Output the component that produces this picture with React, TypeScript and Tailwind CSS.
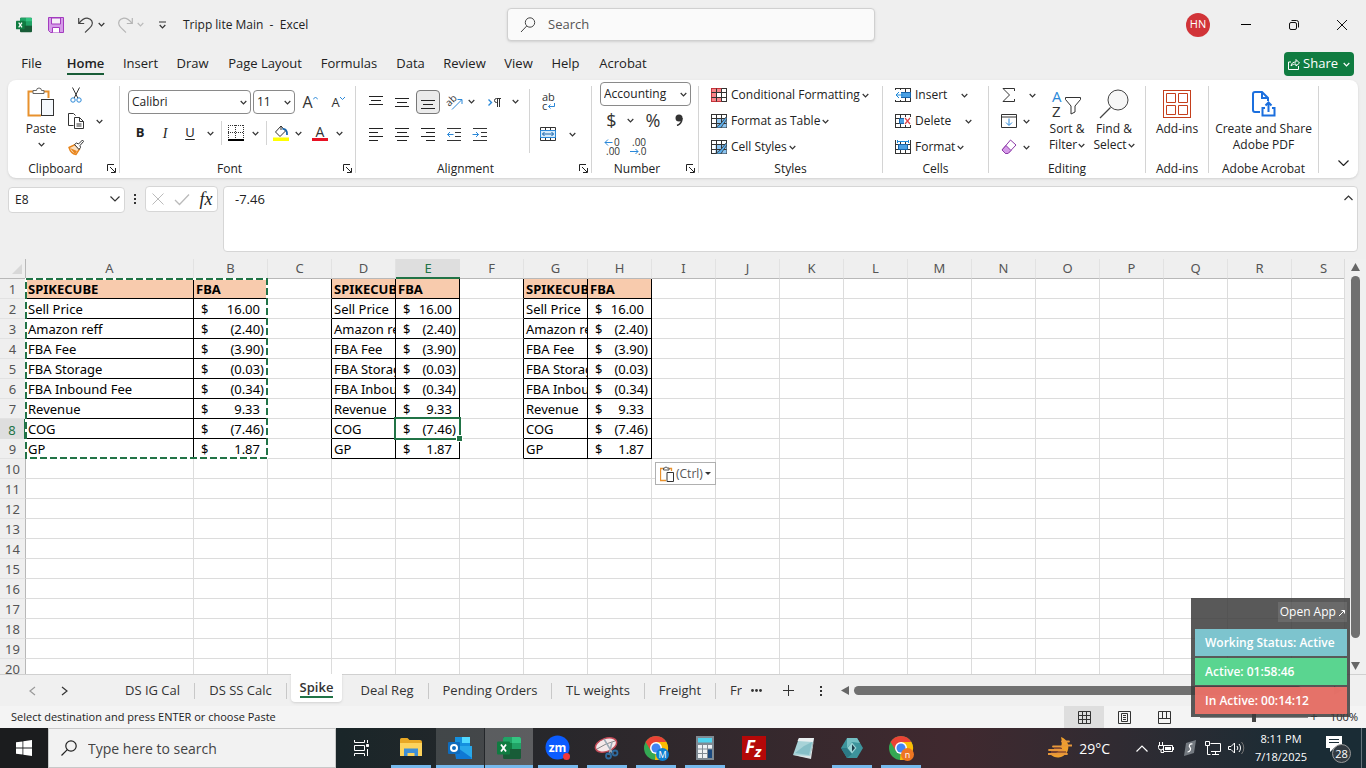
import { useState } from "react";
import type { ReactNode } from "react";

const ribbonTabs = ["File", "Home", "Insert", "Draw", "Page Layout", "Formulas", "Data", "Review", "View", "Help", "Acrobat"];
const tabWidths = ["w-[47px]", "w-[61px]", "w-[49px]", "w-[55px]", "w-[90px]", "w-[78px]", "w-[45px]", "w-[63px]", "w-[45px]", "w-[49px]", "w-[66px]"];

const columns = "ABCDEFGHIJKLMNOPQRS".split("");
const rows = Array.from({ length: 20 }, (_, i) => i + 1);

const items = [
  ["SPIKECUBE", "FBA"],
  ["Sell Price", "16.00"],
  ["Amazon reff", "(2.40)"],
  ["FBA Fee", "(3.90)"],
  ["FBA Storage", "(0.03)"],
  ["FBA Inbound Fee", "(0.34)"],
  ["Revenue", "9.33"],
  ["COG", "(7.46)"],
  ["GP", "1.87"],
];

function Chevron({ className = "text-[#333]" }: { className?: string }) {
  return (
    <svg className={"w-[7px] h-[5px] shrink-0 " + className} viewBox="0 0 7 5" fill="none" stroke="currentColor" strokeWidth="1.2" aria-hidden="true">
      <path d="M0.7 1 3.5 3.8 6.3 1" />
    </svg>
  );
}

function Btn({ label, className = "", justify = "justify-center", children }: { label: string; className?: string; justify?: string; children: ReactNode }) {
  return (
    <button type="button" aria-label={label} className={"flex items-center shrink-0 " + justify + " " + className}>
      {children}
    </button>
  );
}

function Icon({ size = 16, className = "w-4 h-4", children }: { size?: number; className?: string; children: ReactNode }) {
  return (
    <svg className={"shrink-0 overflow-visible " + className} viewBox={`0 0 ${size} ${size}`} fill="none" stroke="#333" aria-hidden="true">
      {children}
    </svg>
  );
}

function Group({ title, width, launcher, children }: { title: string; width: string; launcher?: boolean; children: ReactNode }) {
  return (
    <>
      <section className={"flex flex-col shrink-0 " + width}>
        <div className="h-[78px]">{children}</div>
        <div className="flex items-center h-[17px]">
          <div className="flex-1 text-center whitespace-nowrap">{title}</div>
          {launcher && (
            <Btn label={title + " settings"} className="w-4">
              <svg className="w-[9px] h-[9px]" viewBox="0 0 9 9" fill="none" stroke="#222" aria-hidden="true">
                <path d="M0.5 7V0.5H7M3 3l5 5M8.5 4v4.5H4" />
              </svg>
            </Btn>
          )}
        </div>
      </section>
      <div className="w-px bg-[#d4d4d4] my-1 shrink-0" />
    </>
  );
}

function Combo({ label, value, width }: { label: string; value: string; width: string }) {
  return (
    <div className={"relative h-6 shrink-0 " + width}>
      <select aria-label={label} className="appearance-none w-full h-full border border-[#8a8a8a] rounded bg-white pl-[3px] text-[12px] text-[#222]">
        <option>{value}</option>
      </select>
      <span className="absolute right-1 top-[10px] pointer-events-none">
        <Chevron />
      </span>
    </div>
  );
}

function Lines({ d }: { d: string }) {
  return (
    <Icon>
      <path d={d} stroke="#222" />
    </Icon>
  );
}

function TitleBar() {
  return (
    <header className="flex items-center h-12 pt-px shrink-0 text-[12px] text-[#222]">
      <div className="flex items-center w-[507px] pl-4 shrink-0">
        <ExcelLogo className="w-4 h-4" />
        <Btn label="Save" className="ml-4">
          <Icon>
            <path d="M0.5 0.5h15v15h-13l-2-2z" fill="#d59be8" stroke="#a33bbf" />
            <path d="M3.5 1h9v6h-9z" fill="#f5f0f7" stroke="#a33bbf" />
            <path d="M4.500 15.500v-5h7v5" fill="#fff" stroke="#a33bbf" />
          </Icon>
        </Btn>
        <Btn label="Undo" className="ml-[14px]">
          <Icon>
            <path d="M0.700 1v5.500h5.500M1 6.300C4 2.500 6.800 0.800 10 1.300c3.500.500 5.300 4 3.800 7C12.800 10.300 10 12.800 7 15.500" stroke="#444" strokeWidth="1.200" />
          </Icon>
        </Btn>
        <Btn label="Undo options" className="w-[15px]"><Chevron /></Btn>
        <Btn label="Redo" className="ml-2">
          <Icon>
            <path d="M15.300 1v5.500H9.800M15 6.300C12 2.500 9.200 0.800 6 1.300c-3.500.500-5.300 4-3.800 7C3.200 10.300 6 12.800 9 15.500" stroke="#b5b5b5" strokeWidth="1.200" />
          </Icon>
        </Btn>
        <Btn label="Redo options" className="w-[15px]"><Chevron className="text-[#bbb]" /></Btn>
        <Btn label="Customize Quick Access Toolbar" className="ml-1 w-5">
          <svg className="w-[7px] h-2" viewBox="0 0 7 8" fill="none" stroke="#333" aria-hidden="true"><path d="M0 1h7M0.700 4 3.500 6.800 6.300 4" strokeWidth="1.200" /></svg>
        </Btn>
        <h1 className="ml-[11px] whitespace-pre">Tripp lite Main  -  Excel</h1>
      </div>
      <label className="flex items-center w-[368px] h-[33px] bg-[#fafafa] border border-[#d0d0d0] rounded shadow-sm pl-3 gap-3">
        <svg className="w-4 h-4" viewBox="0 0 16 16" fill="none" stroke="#444" aria-hidden="true">
          <circle cx="10" cy="5.500" r="4.700" /><path d="M6.700 9 1 15" />
        </svg>
        <input type="text" aria-label="Search" placeholder="Search" className="flex-1 outline-none bg-transparent text-[13px] placeholder:text-[#555]" />
      </label>
      <div className="flex items-center ml-auto">
        <Btn label="Account" className="w-6 h-6 rounded-full bg-[#d13438] text-white text-[11px]">HN</Btn>
        <Btn label="Minimize" className="w-12 ml-3"><span className="w-[10px] h-px bg-black" /></Btn>
        <Btn label="Restore" className="w-12">
          <svg className="w-[10px] h-[10px]" viewBox="0 0 10 10" fill="none" stroke="#111" aria-hidden="true"><rect x="0.500" y="2.500" width="7" height="7" rx="1.500" /><path d="M2.500 0.500h5a2 2 0 0 1 2 2v5" /></svg>
        </Btn>
        <Btn label="Close" className="w-12">
          <svg className="w-[10px] h-[10px]" viewBox="0 0 10 10" stroke="#111" aria-hidden="true"><path d="M0 0l10 10M10 0 0 10" /></svg>
        </Btn>
      </div>
    </header>
  );
}

function ExcelLogo({ className }: { className: string }) {
  return (
    <svg className={"shrink-0 " + className} viewBox="0 0 24 24" aria-hidden="true">
      <rect x="6" y="1" width="18" height="22" rx="1.500" fill="#185c37" />
      <path d="M6 2.500A1.500 1.500 0 0 1 7.500 1H15v6H6z" fill="#21a366" />
      <path d="M15 1h7.500A1.500 1.500 0 0 1 24 2.500V7h-9z" fill="#33c481" />
      <path d="M15 7h9v6h-9z" fill="#21a366" />
      <path d="M6 7h9v6H6z" fill="#107c41" />
      <rect x="0" y="5.500" width="13" height="13" rx="1" fill="#107c41" />
      <path d="M4 8.500l5 7M9 8.500l-5 7" stroke="#fff" strokeWidth="1.800" />
    </svg>
  );
}

function RibbonTabs() {
  return (
    <nav className="flex items-center h-8 pl-2 pr-3 shrink-0 text-[13px] text-[#222]">
      {ribbonTabs.map((tab, i) => (
        <button key={tab} type="button" className={"flex justify-center h-full shrink-0 whitespace-nowrap " + tabWidths[i]}>
          <span className={tab === "Home" ? "font-semibold border-b-2 border-[#185c37] h-[27px] pt-[6px]" : "pt-[6px]"}>{tab}</span>
        </button>
      ))}
      <button type="button" className="flex items-center gap-[3px] ml-auto h-6 px-1 rounded bg-[#107c41] text-white">
        <svg className="w-3 h-3" viewBox="0 0 12 12" fill="none" stroke="#fff" aria-hidden="true"><path d="M3 4H0.500v7.500h10V8M3 8c.5-3 2-4 5-4V1.500L11.500 5 8 8V6C6 6 4.500 6.500 3 8z" /></svg>
        Share
        <span className="ml-[2px]"><Chevron className="text-white" /></span>
      </button>
    </nav>
  );
}

function BigButton({ lines, width, chevron, children }: { lines: string[]; width: string; chevron?: boolean; children: ReactNode }) {
  return (
    <button type="button" className={"flex flex-col items-center shrink-0 pt-1 leading-4 whitespace-nowrap " + width}>
      <span className="flex items-center justify-center h-[35px]">{children}</span>
      {lines.map((line, i) => (
        <span key={line} className="flex items-center gap-px">
          {line}
          {chevron && i === lines.length - 1 && <Chevron />}
        </span>
      ))}
    </button>
  );
}

function RowButton({ text, gap = "ml-[2px]", children }: { text: string; gap?: string; children: ReactNode }) {
  return (
    <button type="button" className="flex items-center h-[26px] whitespace-nowrap">
      {children}
      <span className="ml-1">{text}</span>
      <span className={gap}><Chevron /></span>
    </button>
  );
}

function TableIcon({ kind }: { kind: "cond" | "table" | "cell" | "insert" | "delete" | "format" }) {
  return (
    <svg className="w-4 h-[14px] shrink-0" viewBox="0 0 16 14" fill="none" stroke="#333" aria-hidden="true">
      <rect x="0.500" y="0.500" width="15" height="13" fill="#fff" />
      {kind === "cond" && <path d="M0.500 0.500h10v4h-5v5h5v4h-10z" fill="#f9868a" stroke="#c8333a" />}
      {kind === "table" && <path d="M5.500 4.500h10v9h-10z" fill="#8cc4f0" stroke="none" />}
      {kind === "cell" && <path d="M4.500 4.500h11v9h-11z" fill="#8cc4f0" stroke="none" />}
      <path d="M5.500 0.500v13M10.500 0.500v13M0.500 4.500h15M0.500 9.500h15" />
      {kind === "insert" && <><path d="M5.500 4.500h10v5h-10z" fill="#4ba0e3" stroke="#1864ab" /><path d="M0 2h6v10H0z" fill="#fff" stroke="none" /><path d="M8 7H1.500M4 4 1 7l3 3" stroke="#1e88d8" /></>}
      {kind === "delete" && <><path d="M4.500 4.500h5v5h-5z" fill="#4ba0e3" stroke="#1864ab" /><path d="M9 3h7v8H9z" fill="#fff" stroke="none" /><path d="M10 4l5 6M15 4l-5 6" stroke="#e0444a" strokeWidth="1.200" /></>}
      {kind === "format" && <><path d="M3.500 4.500h9v5h-9z" fill="#4ba0e3" stroke="#1864ab" /><path d="M1 0h14v2H1z" fill="#fff" stroke="none" /><path d="M2.500 0v3M13.500 0v3M3 1.500h10" stroke="#1e88d8" /></>}
      {(kind === "table" || kind === "cell") && <path d="M15.500 2.500 9 10.500c-2 0-2 3-5 3 3 1 7 .5 7-1.500l5-7z" fill="#5bb0f0" stroke="#333" strokeWidth="0.800" />}
    </svg>
  );
}

function Ribbon() {
  return (
    <div className="flex mx-2 pt-[2px] pb-px bg-white rounded-lg shadow shrink-0 text-[12px] text-[#222]">
      <Group title="Clipboard" width="w-[111px]" launcher>
        <div className="flex pl-[14px]">
          <button type="button" className="flex flex-col items-center w-[38px] pt-1">
            <svg className="w-7 h-8" viewBox="0 0 28 32" fill="none" aria-hidden="true">
              <path d="M7 5.500H1.500v24H14M16 5.500h5.500V12" stroke="#e8912d" strokeWidth="2" />
              <path d="M6 7.500V4.500h3.500a2.500 2.500 0 0 1 5 0H17v3z" fill="#fff" stroke="#666" />
              <rect x="14.500" y="13.500" width="12" height="16" fill="#f5f9fd" stroke="#333" />
            </svg>
            <span className="leading-[22px]">Paste</span>
            <span className="pt-[2px]"><Chevron /></span>
          </button>
          <div className="flex flex-col w-8">
            <Btn label="Cut" className="h-[26px]">
              <Icon><path d="M4.500 0.500 9.800 11M11.500 0.500 6.200 11" /><circle cx="5" cy="13" r="2.200" stroke="#2b88d8" /><circle cx="11" cy="13" r="2.200" stroke="#2b88d8" /></Icon>
            </Btn>
            <Btn label="Copy" className="h-[26px]">
              <Icon><path d="M5.500 12.500h-5v-12h5l2 2M6.500 4.500h5l4 4v7h-9zM11.500 4.500v4h4M8.500 11h5M8.500 13h5" /></Icon>
            </Btn>
            <Btn label="Format Painter" className="h-[26px]">
              <Icon><path d="M1 8.500 7 5.500l4.500 4.500-3.500 5.500C5 15 2 12 1 8.500z" fill="#fce0c0" stroke="#e8851c" strokeWidth="1.400" /><path d="M2 9l7 3-2 3z" fill="#e8851c" stroke="none" /><path d="M6.500 5.500 8.500 4l2 1 4-4 1 1.500-3.500 4 .5 2-1.500 2z" fill="#fff" /></Icon>
            </Btn>
          </div>
          <Btn label="Copy options" className="w-[14px] h-[78px]"><Chevron /></Btn>
        </div>
      </Group>

      <Group title="Font" width="w-[235px]" launcher>
        <div className="flex flex-col gap-[7px] pt-2 pl-2">
          <div className="flex items-center gap-[2px]">
            <Combo label="Font name" value="Calibri" width="w-[123px]" />
            <Combo label="Font size" value="11" width="w-[42px]" />
            <Btn label="Increase font size" className="w-[26px] text-[16px] leading-6 text-[#333]">A<svg className="w-[5px] h-3" viewBox="0 0 5 12" fill="none" stroke="#2b88d8" aria-hidden="true"><path d="M0 3.500 2.500 1 5 3.500" /></svg></Btn>
            <Btn label="Decrease font size" className="w-[26px] text-[13px] leading-6 text-[#333]">A<svg className="w-[5px] h-3" viewBox="0 0 5 12" fill="none" stroke="#2b88d8" aria-hidden="true"><path d="M0 1 2.500 3.500 5 1" /></svg></Btn>
          </div>
          <div className="flex items-center h-6">
            <Btn label="Bold" className="w-6 text-[13px] font-bold">B</Btn>
            <Btn label="Italic" className="w-[26px] text-[14px] italic font-['Liberation_Serif',serif]">I</Btn>
            <Btn label="Underline" className="w-6 text-[13px] underline underline-offset-2">U</Btn>
            <Btn label="Underline options" className="w-4"><Chevron /></Btn>
            <span className="w-px h-6 mx-[3px] bg-[#d4d4d4]" />
            <Btn label="Borders" className="w-[22px]">
              <Icon><path d="M0.500 0v15M15.500 0v15M0 0.500h16M0 7.500h16M7.500 0v15" strokeDasharray="1 1" /><path d="M0 15h16" stroke="#000" strokeWidth="2" /></Icon>
            </Btn>
            <Btn label="Border options" className="w-4"><Chevron /></Btn>
            <span className="w-px h-6 mx-[3px] bg-[#d4d4d4]" />
            <Btn label="Fill color" className="w-[22px]">
              <Icon><path d="M8 1 2.500 7l4.500 4.500L12.500 6zM8 1V5" fill="#fff" /><path d="M9.500 4c3-.5 5 2 4.500 6" stroke="#1864ab" strokeWidth="1.800" /><path d="M0 12.500h16V16H0z" fill="#ff0" stroke="none" /></Icon>
            </Btn>
            <Btn label="Fill options" className="w-3"><Chevron /></Btn>
            <Btn label="Font color" className="w-8">
              <span className="flex flex-col items-center text-[14px] leading-[13px] w-4 border-b-[3px] border-[#e81123] text-[#333]">A</span>
            </Btn>
            <Btn label="Font color options" className="w-[7px]"><Chevron /></Btn>
          </div>
        </div>
      </Group>

      <Group title="Alignment" width="w-[235px]" launcher>
        <div className="flex pl-[7px] pt-[7px]">
          <div className="flex flex-col gap-2 w-[166px]">
            <div className="flex items-center h-[25px]">
              <Btn label="Top align" className="w-[26px]"><Lines d="M1 2.500h14M3 6.500h10M1 10.500h14" /></Btn>
              <Btn label="Middle align" className="w-[26px]"><Lines d="M1 4.500h14M3 8.500h10M1 12.500h14" /></Btn>
              <Btn label="Bottom align" className="w-[26px]">
                <span className="flex items-center justify-center w-6 h-6 rounded border border-[#777] bg-[#ebebeb]"><Lines d="M1 6.500h14M3 10.500h10M1 14.500h14" /></span>
              </Btn>
              <Btn label="Orientation" className="w-[26px]">
                <Icon><text x="0" y="11" transform="rotate(-45 4 8)" fontSize="10" fill="#333" stroke="none">ab</text><path d="M6 15.500 15.500 6M11.500 5.500h4.500V10" stroke="#2b88d8" /></Icon>
              </Btn>
              <Btn label="Orientation options" className="w-2"><Chevron /></Btn>
              <Btn label="Text direction" className="w-8 ml-1">
                <Icon><path d="M1.500 5.500 4.500 8.500l-3 3" stroke="#2b88d8" strokeWidth="1.400" /><path d="M14 4.500H9.500a2 2 0 0 0 0 4h1V4.500M10.500 8v5M12.500 4.500V13" /></Icon>
              </Btn>
              <Btn label="Direction options" className="w-2"><Chevron /></Btn>
            </div>
            <div className="flex items-center h-6">
              <Btn label="Align left" className="w-[26px]"><Lines d="M1 2.500h14M1 6.500h9M1 10.500h14M1 14.500h9" /></Btn>
              <Btn label="Center" className="w-[26px]"><Lines d="M1 2.500h14M3 6.500h10M1 10.500h14M3 14.500h10" /></Btn>
              <Btn label="Align right" className="w-[26px]"><Lines d="M1 2.500h14M6 6.500h9M1 10.500h14M6 14.500h9" /></Btn>
              <Btn label="Decrease indent" className="w-[26px]">
                <Icon><path d="M1 2.500h14M9 6.500h6M9 10.500h6M1 14.500h14" /><path d="M7.500 8.500h-6M4 6 1.500 8.500 4 11" stroke="#2b88d8" /></Icon>
              </Btn>
              <Btn label="Increase indent" className="w-[26px]">
                <Icon><path d="M1 2.500h14M9 6.500h6M9 10.500h6M1 14.500h14" /><path d="M0.500 8.500h6M4 6l2.500 2.500L4 11" stroke="#2b88d8" /></Icon>
              </Btn>
            </div>
          </div>
          <div className="w-px h-16 bg-[#d4d4d4]" />
          <div className="flex flex-col gap-2 pl-[6px]">
            <Btn label="Wrap text" className="w-6 h-[25px]">
              <Icon><text x="2" y="7" fontSize="11" fill="#333" stroke="none">ab</text><text x="2" y="16" fontSize="11" fill="#333" stroke="none">c</text><path d="M14.500 9v3.500H8.500M10.500 10.500l-2 2 2 2" stroke="#2b88d8" /></Icon>
            </Btn>
            <div className="flex items-center h-6">
              <Btn label="Merge and center" className="w-6">
                <Icon><path d="M0.500 1.500h15v13H0.500zM5.500 1.500v3M10.500 1.500v3M5.500 12v3M10.500 12v3" /><path d="M0.500 4.500h15v7H0.500z" fill="#d5eafa" stroke="#2b88d8" /><path d="M2.500 8h11M4.500 6l-2 2 2 2M11.500 6l2 2-2 2" stroke="#1864ab" /></Icon>
              </Btn>
              <Btn label="Merge options" className="w-6"><Chevron /></Btn>
            </div>
          </div>
        </div>
      </Group>

      <Group title="Number" width="w-[106px]" launcher>
        <div className="pl-2">
          <Combo label="Number format" value="Accounting" width="w-[91px]" />
          <div className="flex items-center h-7 text-[#333]">
            <Btn label="Accounting format" className="w-[23px] text-[18px]">$</Btn>
            <Btn label="Currency options" className="w-[14px]"><Chevron /></Btn>
            <Btn label="Percent style" className="w-8 text-[18px]">%</Btn>
            <Btn label="Comma style" className="w-5">
              <svg className="w-[9px] h-3" viewBox="0 0 9 12" aria-hidden="true"><circle cx="4" cy="4" r="3.500" fill="#333" /><path d="M7 4C7 8 5 10.500 2 11.500" stroke="#333" strokeWidth="1.500" fill="none" /></svg>
            </Btn>
          </div>
          <div className="flex items-center h-[25px]">
            <Btn label="Increase decimal" className="w-6">
              <Icon><text x="10" y="7" fontSize="10" fill="#333" stroke="none">0</text><text x="2" y="16" fontSize="10" fill="#333" stroke="none">.00</text><path d="M8.500 3.500H1M4 0.500l-3 3 3 3" stroke="#2b88d8" /></Icon>
            </Btn>
            <Btn label="Decrease decimal" className="w-7">
              <Icon><text x="2" y="7" fontSize="10" fill="#333" stroke="none">.00</text><text x="8" y="16" fontSize="10" fill="#333" stroke="none">.0</text><path d="M0 12.500h8M5.500 10 8 12.500 5.500 15" stroke="#2b88d8" /></Icon>
            </Btn>
          </div>
        </div>
      </Group>

      <Group title="Styles" width="w-[183px]">
        <div className="flex flex-col pl-3">
          <RowButton text="Conditional Formatting"><TableIcon kind="cond" /></RowButton>
          <RowButton text="Format as Table"><TableIcon kind="table" /></RowButton>
          <RowButton text="Cell Styles"><TableIcon kind="cell" /></RowButton>
        </div>
      </Group>

      <Group title="Cells" width="w-[105px]">
        <div className="flex flex-col pl-3">
          <RowButton text="Insert" gap="ml-[14px]"><TableIcon kind="insert" /></RowButton>
          <RowButton text="Delete" gap="ml-[14px]"><TableIcon kind="delete" /></RowButton>
          <RowButton text="Format"><TableIcon kind="format" /></RowButton>
        </div>
      </Group>

      <Group title="Editing" width="w-[156px]">
        <div className="flex">
          <div className="flex flex-col pl-3 w-[54px]">
            <Btn label="AutoSum" justify="justify-start" className="h-[26px] gap-3"><Icon><path d="M13.500 4V1.500H2L8.500 8 2 14.500h11.500V12" /></Icon><Chevron /></Btn>
            <Btn label="Fill" justify="justify-start" className="h-[26px] gap-[6px]"><Icon><path d="M0.500 1.500h15v13H0.500zM0.500 4h15" /><path d="M8 5.500V12M5 9.500 8 12.500l3-3" stroke="#2b88d8" /></Icon><Chevron /></Btn>
            <Btn label="Clear" justify="justify-start" className="h-[26px] gap-[6px]"><Icon><path d="M9.500 1 15 6 7 14.500H4.500L1 11z" fill="#fff" stroke="#8d3aa8" /><path d="M5 6.500 10 11.500 7 14.500H4.500L1 11z" fill="#d59be8" stroke="#8d3aa8" /></Icon><Chevron /></Btn>
          </div>
          <BigButton lines={["Sort &", "Filter"]} width="w-[48px]" chevron>
            <svg className="w-[30px] h-[30px] overflow-visible" viewBox="0 0 30 30" fill="none" stroke="#333" aria-hidden="true">
              <text x="0" y="13" fontSize="15" fill="#2b88d8" stroke="none">A</text>
              <text x="0" y="28" fontSize="15" fill="#333" stroke="none">Z</text>
              <path d="M13.500 8.500h15v2L23 17v6l-4 2v-8l-5.500-6.500z" />
            </svg>
          </BigButton>
          <BigButton lines={["Find &", "Select"]} width="w-[46px]" chevron>
            <svg className="w-[30px] h-[30px]" viewBox="0 0 30 30" fill="none" stroke="#444" aria-hidden="true">
              <circle cx="19" cy="11" r="10" fill="#f7f7f7" /><path d="M11.500 18.500 1 29" strokeWidth="1.300" />
            </svg>
          </BigButton>
        </div>
      </Group>

      <Group title="Add-ins" width="w-[62px]">
        <BigButton lines={["Add-ins"]} width="w-[62px]">
          <svg className="w-7 h-7" viewBox="0 0 28 28" fill="none" stroke="#c43e1c" aria-hidden="true">
            <rect x="0.500" y="0.500" width="27" height="27" /><path d="M3.500 3.500h9v9h-9zM15.500 3.500h9v9h-9zM3.500 15.500h9v9h-9zM15.500 15.500h9v9h-9z" />
          </svg>
        </BigButton>
      </Group>

      <Group title="Adobe Acrobat" width="w-[109px]">
        <BigButton lines={["Create and Share", "Adobe PDF"]} width="w-[109px]">
          <svg className="w-6 h-[26px]" viewBox="0 0 24 26" fill="none" stroke="#1b6fde" strokeWidth="2" aria-hidden="true">
            <path d="M8 21H3a2 2 0 0 1-2-2V3a2 2 0 0 1 2-2h7l6 6v3M10 1v6h6" />
            <path d="M13 17h-2.500v7.500h12V17H20M16.500 21v-9M13.500 14.500l3-3 3 3" />
          </svg>
        </BigButton>
      </Group>

      <Btn label="Collapse ribbon" className="ml-auto self-end w-[30px] h-7">
        <svg className="w-[11px] h-[6px]" viewBox="0 0 11 6" fill="none" stroke="#222" strokeWidth="1.200" aria-hidden="true"><path d="M0.500 0.500l5 5 5-5" /></svg>
      </Btn>
    </div>
  );
}

function FormulaBar() {
  const [formula, setFormula] = useState("-7.46");

  return (
    <div className="flex items-start pl-2 pr-2 pt-2 pb-[7px] shrink-0 text-[#222]">
      <div className="relative w-[117px] h-[26px] shrink-0">
        <input aria-label="Name box" defaultValue="E8" className="w-full h-full bg-white border border-[#d6d6d6] rounded pl-[6px] text-[12px] outline-none" />
        <svg className="absolute right-[5px] top-[10px] w-[10px] h-[6px]" viewBox="0 0 10 6" fill="none" stroke="#333" strokeWidth="1.200" aria-hidden="true"><path d="M0.500 0.500 5 5 9.500 0.500" /></svg>
      </div>
      <div className="flex flex-col items-center justify-center gap-[2px] w-5 h-[26px] shrink-0">
        <span className="w-[2px] h-[2px] bg-[#333]" />
        <span className="w-[2px] h-[2px] bg-[#333]" />
        <span className="w-[2px] h-[2px] bg-[#333]" />
      </div>
      <div className="flex items-center w-[73px] h-[26px] bg-white border border-[#d6d6d6] rounded shrink-0">
        <Btn label="Cancel" className="w-6"><Icon className="w-3 h-3" size={12}><path d="M0.500 0.500l11 11M11.500 0.500l-11 11" stroke="#bbb" /></Icon></Btn>
        <Btn label="Enter" className="w-6"><Icon><path d="M1 9l4.500 4.500L15 3.500" stroke="#bbb" strokeWidth="1.300" /></Icon></Btn>
        <Btn label="Insert function" className="w-6 text-[18px] leading-5 italic font-['Liberation_Serif',serif]">fx</Btn>
      </div>
      <div className="relative flex flex-1 ml-[5px]">
        <textarea aria-label="Formula" value={formula} onChange={(e) => setFormula(e.target.value)} className="flex-1 h-[66px] resize-none bg-white border border-[#d6d6d6] rounded pl-[11px] pt-[3px] text-[13px] leading-[18px] outline-none" />
        <svg className="absolute right-[5px] top-[9px] w-[9px] h-[6px]" viewBox="0 0 9 6" fill="none" stroke="#333" strokeWidth="1.200" aria-hidden="true"><path d="M0.500 5 4.500 1l4 4" /></svg>
      </div>
    </div>
  );
}

function Cell({ col, row }: { col: string; row: number }) {
  const inTable = row <= 9;
  const isName = inTable && "ADG".includes(col);
  const isValue = inTable && "BEH".includes(col);
  const item = items[row - 1];

  let border = "border-r border-b border-[#dcdcdc]";
  if (isName || isValue) border = "border-r border-b border-black";
  else if (inTable && "CF".includes(col)) border = "border-r border-b border-r-black border-b-[#dcdcdc]";
  const fill = (isName || isValue) && row === 1 ? " bg-[#f8cbad] font-bold" : "";

  return (
    <td className={"relative h-5 p-0 " + border + fill}>
      {(isName || (isValue && row === 1)) && (
        <div className="overflow-hidden whitespace-nowrap pl-[2px] h-[19px] leading-[21px]">{item[isName ? 0 : 1]}</div>
      )}
      {isValue && row > 1 && (
        <div className={"flex justify-between pl-[7px] h-[19px] leading-[21px] " + (item[1].startsWith("(") ? "pr-[3px]" : "pr-[7px]")}>
          <span>$</span>
          <span>{item[1]}</span>
        </div>
      )}
      {col === "E" && row === 8 && (
        <div className="absolute -inset-[2px] z-10 border-2 border-[#217346]">
          <span className="absolute -right-[3px] -bottom-[3px] w-[5px] h-[5px] bg-[#217346] outline outline-white" />
        </div>
      )}
    </td>
  );
}

function Sheet() {
  return (
    <main className="flex flex-1 min-h-0 bg-[#f0f0f0]">
      <div className="relative flex-1 min-w-0 overflow-hidden">
        <table className="table-fixed border-separate border-spacing-0 w-[1356px] bg-white text-[13px] text-black font-['Noto_Sans','Open_Sans',sans-serif]">
          <colgroup>
            <col className="w-[26px]" />
            <col className="w-[168px]" />
            <col className="w-[74px]" />
            {columns.slice(2).map((c) => (
              <col key={c} className="w-[64px]" />
            ))}
          </colgroup>
          <thead>
            <tr className="bg-[#efefef] text-[#555]">
              <td className="h-5 p-0 border-r border-b border-[#b8b8b8]">
                <svg className="w-[10px] h-[10px] ml-3" viewBox="0 0 10 10" aria-hidden="true"><path d="M10 0v10H0z" fill="#d8d8d8" /></svg>
              </td>
              {columns.map((c) => (
                <th key={c} scope="col" className={"h-5 p-0 font-normal leading-[17px] " + (c === "E" ? "bg-[#dedede] text-[#217346] border-b-2 border-[#217346]" : "border-b border-b-[#b8b8b8] border-r border-r-[#e2e2e2]")}>
                  {c}
                </th>
              ))}
            </tr>
          </thead>
          <tbody>
            {rows.map((row) => (
              <tr key={row}>
                <th scope="row" className={"h-5 p-0 font-normal " + (row === 8 ? "bg-[#dedede] text-[#217346] border-r-2 border-[#217346]" : "bg-[#efefef] text-[#555] border-r border-b border-r-[#b8b8b8] border-b-[#e2e2e2]")}>
                  <div className="h-[19px] leading-[21px]">{row}</div>
                </th>
                {columns.map((c) => (
                  <Cell key={c} col={c} row={row} />
                ))}
              </tr>
            ))}
          </tbody>
        </table>

        {/* copied range A1:B9 */}
        <svg className="absolute left-[25px] top-[19px] w-[244px] h-[181px]" viewBox="0 0 244 181" fill="none" aria-hidden="true">
          <path d="M1 1h241v179H1z" stroke="#fff" strokeWidth="2" />
          <path d="M1 1h241v179H1z" stroke="#217346" strokeWidth="2" strokeDasharray="7 3" />
        </svg>

        <button type="button" className="absolute left-[655px] top-[203px] flex items-center gap-[2px] h-[23px] px-1 bg-white border border-[#b0b0b0] text-[12px] text-[#555]">
          <svg className="w-[14px] h-4" viewBox="0 0 14 16" fill="none" aria-hidden="true">
            <path d="M3 2.500H0.500v12H6M9 2.500h2.500V5" stroke="#e8912d" strokeWidth="1.300" />
            <path d="M3.500 4V2h1.500a1 1 0 0 1 2 0h2v2z" stroke="#555" fill="#fff" />
            <path d="M7 6.500h6.500v9H7z" fill="#fff" stroke="#333" />
          </svg>
          (Ctrl)
          <svg className="w-[6px] h-[3px]" viewBox="0 0 6 3" aria-hidden="true"><path d="M0 0h6L3 3z" fill="#333" /></svg>
        </button>
      </div>
      <div className="flex flex-col items-center w-[22px] pt-1 pb-1 border-l border-[#dcdcdc]">
        <svg className="w-[9px] h-2" viewBox="0 0 9 8" aria-hidden="true"><path d="M0 8h9L4.500 0z" fill="#666" /></svg>
        <div className="flex-1 w-[9px] mt-[5px] mb-6 rounded-full bg-[#707070]" />
        <svg className="w-[9px] h-2" viewBox="0 0 9 8" aria-hidden="true"><path d="M0 0h9L4.500 8z" fill="#666" /></svg>
      </div>
    </main>
  );
}

const sheetTabs = [
  { name: "DS IG Cal", width: "w-[84px]" },
  { name: "DS SS Calc", width: "w-[92px]" },
  { name: "Spike", width: "w-[51px]" },
  { name: "Deal Reg", width: "w-[83px]" },
  { name: "Pending Orders", width: "w-[123px]" },
  { name: "TL weights", width: "w-[93px]" },
  { name: "Freight", width: "w-[71px]" },
];

function SheetTabs() {
  return (
    <div className="flex h-8 shrink-0 bg-[#f0f0f0] border-t border-[#d0d0d0] text-[13px] text-[#333]">
      <div className="flex items-center w-[111px] pl-5 shrink-0">
        <Btn label="Previous sheet" className="w-6"><svg className="w-[7px] h-[10px]" viewBox="0 0 7 10" fill="none" stroke="#999" strokeWidth="1.200" aria-hidden="true"><path d="M6 1 1 5l5 4" /></svg></Btn>
        <Btn label="Next sheet" className="w-6 ml-2"><svg className="w-[7px] h-[10px]" viewBox="0 0 7 10" fill="none" stroke="#333" strokeWidth="1.200" aria-hidden="true"><path d="M1 1l5 4-5 4" /></svg></Btn>
      </div>
      {sheetTabs.map((tab) =>
        tab.name === "Spike" ? (
          <button key={tab.name} type="button" className={"flex justify-center h-7 mx-1 -mt-px bg-white rounded-b shadow shrink-0 font-semibold " + tab.width}>
            <span className="h-6 pt-1 border-b-2 border-[#217346]">{tab.name}</span>
          </button>
        ) : (
          <button key={tab.name} type="button" className={"flex items-center justify-center h-[31px] shrink-0 whitespace-nowrap " + tab.width}>
            <span className="flex-1">{tab.name}</span>
            <span className="w-px h-4 bg-[#c8c8c8]" />
          </button>
        )
      )}
      <button type="button" className="w-[26px] pl-[14px] h-[31px] overflow-hidden shrink-0 text-left">Fr</button>
      <Btn label="More sheets" className="w-7">
        <svg className="w-[11px] h-[3px]" viewBox="0 0 11 3" fill="#333" aria-hidden="true"><circle cx="1.500" cy="1.500" r="1.400" /><circle cx="5.500" cy="1.500" r="1.400" /><circle cx="9.500" cy="1.500" r="1.400" /></svg>
      </Btn>
      <Btn label="New sheet" className="w-9">
        <svg className="w-[11px] h-[11px]" viewBox="0 0 11 11" stroke="#333" aria-hidden="true"><path d="M5.500 0v11M0 5.500h11" /></svg>
      </Btn>
      <div className="flex flex-col items-center justify-center gap-[2px] w-[30px] shrink-0">
        <span className="w-[2px] h-[2px] bg-[#333]" />
        <span className="w-[2px] h-[2px] bg-[#333]" />
        <span className="w-[2px] h-[2px] bg-[#333]" />
      </div>
      <div className="flex items-center flex-1 h-[31px] pl-[5px] pr-6">
        <svg className="w-2 h-[9px] shrink-0" viewBox="0 0 8 9" aria-hidden="true"><path d="M8 0v9L0 4.500z" fill="#666" /></svg>
        <div className="flex-1 h-[9px] ml-[5px] mr-8 rounded-full bg-[#707070]" />
        <svg className="w-2 h-[9px] shrink-0" viewBox="0 0 8 9" aria-hidden="true"><path d="M0 0v9l8-4.500z" fill="#666" /></svg>
      </div>
    </div>
  );
}

function StatusBar() {
  return (
    <footer className="flex items-center h-[22px] shrink-0 pl-[11px] pr-2 bg-[#f4f4f4] text-[11px] text-[#222]">
      <span className="pt-px">Select destination and press ENTER or choose Paste</span>
      <div className="flex items-center ml-auto h-full">
        <Btn label="Normal view" className="w-10 h-full bg-[#dedede]"><Icon className="w-[13px] h-[13px]" size={13}><path d="M0.500 0.500h12v12H0.500zM4.500 0v13M8.500 0v13M0 4.500h13M0 8.500h13" /></Icon></Btn>
        <Btn label="Page layout view" className="w-10"><Icon className="w-[13px] h-[13px]" size={13}><path d="M0.500 0.500h12v12H0.500zM3.500 2.500h6v8h-6zM5 4.500h3M5 6.500h3M5 8.500h3" /></Icon></Btn>
        <Btn label="Page break preview" className="w-10"><Icon className="w-[13px] h-[13px]" size={13}><path d="M0.500 0.500h12v12H0.500zM0.500 7.500h12M4.500 0.500v7M8.500 0.500v7" /></Icon></Btn>
        <div className="flex items-center justify-center w-[108px] h-px ml-4 bg-[#888]"><span className="w-1 h-[9px] bg-[#444]" /></div>
        <Btn label="Zoom in" className="w-3 text-[13px]">+</Btn>
        <span className="ml-[10px] pt-px">100%</span>
      </div>
    </footer>
  );
}

function StatusWidget() {
  return (
    <aside className="absolute right-4 bottom-[51px] z-20 flex flex-col gap-[2px] w-[159px] p-1 pr-[3px] pb-[3px] bg-[#3c3c3c]/85 text-[12px] text-white">
      <button type="button" className="self-end h-5 px-[2px] mb-[5px] bg-white/10">
        Open App <svg className="inline w-[6px] h-[6px]" viewBox="0 0 6 6" fill="none" stroke="#fff" aria-hidden="true"><path d="M0 6 5.500 0.500M2.500 0.500h3v3" /></svg>
      </button>
      <div className="h-[27px] pl-[10px] leading-[27px] font-semibold whitespace-nowrap bg-[#7fcad5]/95">Working Status: Active</div>
      <div className="h-[27px] pl-[10px] leading-[27px] font-semibold bg-[#5bdc94]/95">Active: 01:58:46</div>
      <div className="h-[27px] pl-[10px] leading-[27px] font-semibold bg-[#f5766c]/90">In Active: 00:14:12</div>
    </aside>
  );
}

function ChromeIcon({ badge, letter }: { badge: string; letter: string }) {
  return (
    <svg className="w-[26px] h-[26px]" viewBox="0 0 26 26" aria-hidden="true">
      <circle cx="13" cy="13" r="12" fill="#34a853" />
      <path d="M2.600 7A12 12 0 0 1 23.400 7L13 13z" fill="#ea4335" />
      <path d="M2.600 7 8 16l5-3V7z" fill="#ea4335" />
      <path d="M23.400 7H13v6l-1 12A12 12 0 0 0 23.400 7z" fill="#fbbc04" />
      <circle cx="13" cy="13" r="6" fill="#fff" />
      <circle cx="13" cy="13" r="4.500" fill="#4285f4" />
      <circle cx="19.500" cy="19.500" r="6.500" className={badge} />
      <text x="19.500" y="23" fontSize="9" textAnchor="middle" fill="#fff">{letter}</text>
    </svg>
  );
}

function TaskButton({ label, bg = "", open = true, children }: { label: string; bg?: string; open?: boolean; children: ReactNode }) {
  return (
    <button type="button" aria-label={label} className={"flex flex-col items-center w-12 mr-px h-10 shrink-0 " + bg}>
      <span className="flex items-center justify-center h-[37px] pt-[2px]">{children}</span>
      {open && <span className={(bg ? "w-12" : "w-10") + " h-[3px] bg-[#76b9ed]"} />}
    </button>
  );
}

function Taskbar() {
  return (
    <div className="flex items-center h-10 shrink-0 bg-linear-to-r from-[#1a2629] from-25% via-[#40292f] via-70% to-[#1a2c35] to-95% text-white">
      <Btn label="Start" className="w-12 h-full bg-[#1b1c1e]">
        <svg className="w-4 h-4" viewBox="0 0 16 16" fill="#fff" aria-hidden="true"><path d="M0 2.300 6.500 1.400v6.200H0zM7.300 1.300 16 0v7.600H7.300zM0 8.400h6.500v6.200L0 13.700zM7.300 8.400H16V16l-8.700-1.300z" /></svg>
      </Btn>
      <label className="flex items-center gap-[11px] w-72 h-full pl-3 border border-[#c8c8c8] bg-[#f2f2f2] shrink-0">
        <svg className="w-4 h-4" viewBox="0 0 16 16" fill="none" stroke="#222" strokeWidth="1.200" aria-hidden="true"><circle cx="10" cy="6" r="5.200" /><path d="M6.300 9.700 0.500 15.500" /></svg>
        <input type="text" aria-label="Type here to search" placeholder="Type here to search" className="flex-1 min-w-0 bg-transparent outline-none text-[14px] placeholder:text-[#444]" />
      </label>
      <Btn label="Task view" className="w-[51px] h-full">
        <Icon><path d="M0.500 0v2.500h10V0M0.500 16v-2.500h10V16M0.500 5.500h10v5h-10zM13.500 0v3M13.500 9v7" stroke="#fff" /><path d="M12.500 4.500h2v2h-2z" fill="#fff" stroke="#fff" /></Icon>
      </Btn>
      <TaskButton label="File Explorer">
        <svg className="w-[22px] h-[19px]" viewBox="0 0 22 19" aria-hidden="true"><path d="M0 1.500A1.500 1.500 0 0 1 1.500 0h6l2 2H20a2 2 0 0 1 2 2v13H0z" fill="#e8a825" /><path d="M0 5h22v13H0z" fill="#fdd35c" /><path d="M4 10.500h14V18h-3.500v-3h-7v3H4z" fill="#3f8fd6" /></svg>
      </TaskButton>
      <TaskButton label="Outlook" bg="bg-white/15">
        <svg className="w-6 h-[22px]" viewBox="0 0 24 22" aria-hidden="true"><path d="M7 0h15v12H7z" fill="#1490df" /><path d="M14 0h8v6h-8z" fill="#50d9ff" /><path d="M7 9h17v13H8z" fill="#28a8ea" /><path d="m7 9 17 12-1 1H8z" fill="#0f78d4" /><rect y="5" width="12" height="12" rx="1" fill="#0f6cbd" /><circle cx="6" cy="11" r="3" fill="none" stroke="#fff" strokeWidth="2" /></svg>
      </TaskButton>
      <TaskButton label="Excel" bg="bg-white/25"><ExcelLogo className="w-6 h-6" /></TaskButton>
      <TaskButton label="Zoom">
        <svg className="w-[26px] h-[26px]" viewBox="0 0 26 26" aria-hidden="true"><circle cx="12.500" cy="12.500" r="12" fill="#0b5cff" /><text x="12.500" y="16.500" fontSize="12" fontWeight="700" textAnchor="middle" fill="#fff">zm</text><circle cx="21.500" cy="21.500" r="3.500" fill="#f0383a" /></svg>
      </TaskButton>
      <TaskButton label="Snipping Tool">
        <svg className="w-[26px] h-6" viewBox="0 0 26 24" aria-hidden="true"><ellipse cx="12" cy="9" rx="11" ry="6.500" transform="rotate(-20 12 9)" fill="#f4e9ea" stroke="#c24b58" strokeWidth="1.500" /><path d="M12 8 3 13M12 8l9-3" stroke="#888" /><path d="m10 3 9 15M18 6l-3 13" stroke="#9aa9b5" strokeWidth="1.500" /><circle cx="14.500" cy="20" r="2.500" fill="none" stroke="#2e6a9e" strokeWidth="1.800" /><circle cx="21" cy="17" r="2.500" fill="none" stroke="#2e6a9e" strokeWidth="1.800" /></svg>
      </TaskButton>
      <TaskButton label="Chrome"><ChromeIcon badge="fill-[#0d7fd1]" letter="M" /></TaskButton>
      <TaskButton label="Calculator">
        <svg className="w-[18px] h-6" viewBox="0 0 18 24" aria-hidden="true"><path d="M0 0h18v24H0z" fill="#7f8a93" /><path d="M2 2h14v4.500H2z" fill="#4fd3ee" /><path d="M2 9h4v3.500H2zM7 9h4v3.500H7zM12 9h4v3.500h-4zM2 13.500h4V17H2zM7 13.500h4V17H7zM2 18h4v4H2zM7 18h4v4H7z" fill="#eef2f5" /><path d="M12 13.500h4V22h-4z" fill="#1b4a80" /></svg>
      </TaskButton>
      <TaskButton label="FileZilla" open={false}>
        <svg className="w-6 h-6" viewBox="0 0 24 24" aria-hidden="true"><path d="M0 0h24v24H0z" fill="#b50808" /><text x="8" y="17" fontSize="18" fontWeight="700" fontStyle="italic" textAnchor="middle" fill="#fff">F</text><text x="16" y="21" fontSize="15" fontWeight="700" fontStyle="italic" textAnchor="middle" fill="#fff">z</text></svg>
      </TaskButton>
      <TaskButton label="Notepad" open={false}>
        <svg className="w-[22px] h-6" viewBox="0 0 22 24" aria-hidden="true"><path d="M7 2h15l-4 20-17-3z" fill="#a8d3d8" /><path d="M7 2h15l-1 4L5.500 5z" fill="#e9eff0" /><path d="m1 19 17 1 4-17-3 20z" fill="#dde5e6" /><path d="m12 10 8-4-3 13-14-2z" fill="#6fb3bd" opacity=".6" /></svg>
      </TaskButton>
      <TaskButton label="Time tracker">
        <svg className="w-[22px] h-[22px]" viewBox="0 0 22 22" aria-hidden="true"><path d="M6 1h10l6 10-6 10H6L0 11z" fill="#3d949c" /><path d="M6 1h10l3 5-8-1-5 6z" fill="#74bfc3" /><path d="M0 11l6 10 5-4-5-6z" fill="#2c7a86" /><path d="M11 5.500 15.500 11 11 16.500 6.500 11z" fill="#9cd5d6" /><path d="M11 7.500l3 3.500-3 3.500z" fill="#1d3b4a" /></svg>
      </TaskButton>
      <TaskButton label="Chrome work"><ChromeIcon badge="fill-[#ee7522]" letter="n" /></TaskButton>

      <div className="flex items-center ml-auto h-full pr-1">
        <button type="button" className="flex items-center gap-[7px] text-[14px]">
          <svg className="w-6 h-6" viewBox="0 0 24 24" aria-hidden="true"><path d="M13 1a10.500 10.500 0 1 1-11 17c8 1 14-7 11-17z" fill="#f0a02c" /><path d="M1 14h14M0 18h19M5 10.500h9M14 5.500h7M16 9.500h8" stroke="#e8973a" strokeWidth="1.800" strokeLinecap="round" fill="none" /><path d="M3 16h15M6 12.300h8" stroke="#8a4a30" strokeWidth="1.300" /></svg>
          29°C
        </button>
        <Btn label="Show hidden icons" className="w-5 ml-[22px]"><svg className="w-3 h-[7px]" viewBox="0 0 12 7" fill="none" stroke="#fff" strokeWidth="1.200" aria-hidden="true"><path d="M0.500 6.500 6 1l5.500 5.500" /></svg></Btn>
        <Btn label="Battery" className="w-7"><Icon><path d="M5.500 5.500h9v6h-9zM15.500 7v3" stroke="#fff" /><path d="M7 7h6v3H7z" fill="#fff" stroke="none" /><path d="M1.500 2v3M4.500 2v3M0.500 5.500h5v2a2 2 0 0 1-5 0zM3 9.500v3h3" stroke="#fff" /></Icon></Btn>
        <Btn label="Tray app" className="w-5"><svg className="w-3 h-4" viewBox="0 0 12 16" aria-hidden="true"><path d="M2 3 12 0 10 13 0 16z" fill="#737980" /><path d="M8.500 4c-3-.5-4 2-2.500 3.500S6 12 3.500 12" stroke="#fff" strokeWidth="1.200" fill="none" /></svg></Btn>
        <Btn label="Network" className="w-[26px]"><Icon><path d="M5.500 3.500h10v8h-9.500M10.500 11.500v3M7 14.500h7M0.500 1.500h4v4h-4zM2.500 5.500v9h3" stroke="#fff" /></Icon></Btn>
        <Btn label="Volume" className="w-5"><Icon><path d="M0.500 6.500h2.500L6.500 3v10L3 9.500H0.500zM9 6a3 3 0 0 1 0 4M11 4a6 6 0 0 1 0 8" stroke="#fff" /><path d="M13.500 2a9 9 0 0 1 0 12" stroke="#777" /></Icon></Btn>
        <button type="button" className="flex flex-col items-center w-[70px] text-[11px] leading-[18px]">
          <span>8:11 PM</span>
          <span>7/18/2025</span>
        </button>
        <button type="button" aria-label="Notifications" className="relative w-[34px] h-8 ml-[2px]">
          <svg className="absolute left-2 top-1 w-4 h-4" viewBox="0 0 16 16" aria-hidden="true"><path d="M0 0h16v12H8l-4 4v-4H0z" fill="#fff" /><path d="M3 3.500h10M3 6.500h10" stroke="#1a2c35" /></svg>
          <span className="absolute left-[14px] top-[12px] w-[19px] h-[19px] rounded-full border border-[#999] bg-[#333b42] text-[11px] leading-[17px] text-center">28</span>
        </button>
        <span className="w-px h-10 ml-[9px] bg-[#66727a]" />
      </div>
    </div>
  );
}

export default function App() {
  return (
    <div className="relative flex flex-col h-screen overflow-hidden bg-[#efefef] font-['Open_Sans','Noto_Sans',sans-serif]">
      <TitleBar />
      <RibbonTabs />
      <Ribbon />
      <FormulaBar />
      <Sheet />
      <SheetTabs />
      <StatusBar />
      <Taskbar />
      <StatusWidget />
    </div>
  );
}
